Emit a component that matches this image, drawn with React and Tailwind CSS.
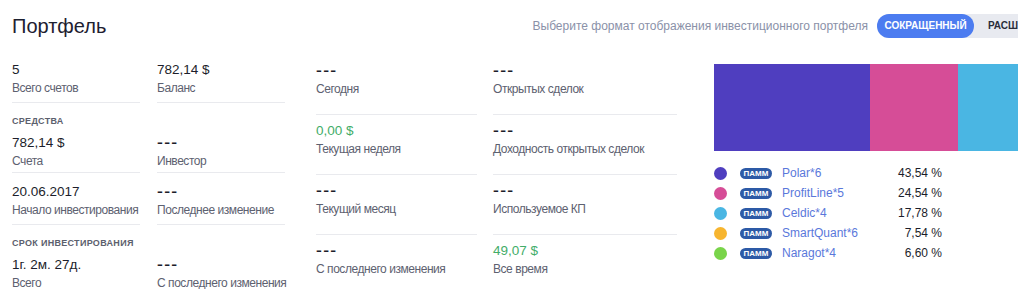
import React from "react";

const F = "font-['Liberation_Sans',Arial,sans-serif]";

function Val({ value, green }) {
  const dash = value === "---";
  return (
    <div
      className={`text-[13.5px] leading-[18px] whitespace-nowrap ${green ? "text-[#43ad69]" : "text-[#1c1e2b]"}`}
    >
      {dash ? (
        <span className="inline-block origin-left scale-x-[1.3] tracking-[1px] font-bold">---</span>
      ) : (
        value
      )}
    </div>
  );
}

function Lbl({ label }) {
  return (
    <div className="text-[12px] leading-[18px] tracking-[-0.45px] whitespace-nowrap text-[#5d6170]">{label}</div>
  );
}

function Cell({ value, label, green, header, last }) {
  return (
    <div className={`${header !== undefined ? "pt-[10px] pb-[2px]" : "pt-[10px] pb-[4px]"} ${last ? "" : "border-b border-[#e9eaee]"}`}>
      {header !== undefined && (
        <div className="h-[16px] leading-[16px] text-[9px] font-bold tracking-[0.3px] whitespace-nowrap text-[#5c606d] mb-[5px]">
          {header}
        </div>
      )}
      <Val value={value} green={green} />
      <Lbl label={label} />
    </div>
  );
}

function Cell2({ value, label, green, last }) {
  return (
    <div className={`pt-[7px] pb-[16px] ${last ? "" : "border-b border-[#e9eaee]"}`}>
      <Val value={value} green={green} />
      <Lbl label={label} />
    </div>
  );
}

const legend = [
  { c: "bg-[#4f3ebf]", n: "Polar*6", p: "43,54 %" },
  { c: "bg-[#d64d97]", n: "ProfitLine*5", p: "24,54 %" },
  { c: "bg-[#4ab6e3]", n: "Celdic*4", p: "17,78 %" },
  { c: "bg-[#f7b52f]", n: "SmartQuant*6", p: "7,54 %" },
  { c: "bg-[#79d44a]", n: "Naragot*4", p: "6,60 %" },
];

export default function App() {
  return (
    <div className={`w-[1018px] h-[289px] overflow-hidden bg-white ${F}`}>
      <div className="flex items-center h-[51px] w-[1200px]">
        <div className="w-[525px] shrink-0 pl-[12px] text-[20px] text-[#1d2030]">Портфель</div>
        <div className="w-[343px] shrink-0 text-right text-[12px] text-[#8a91a8] whitespace-nowrap">
          Выберите формат отображения инвестиционного портфеля
        </div>
        <div className="ml-[9px] flex shrink-0 h-[24px] rounded-full bg-[#e8eaf0]">
          <div className="w-[97px] h-[24px] rounded-full bg-[#4c7cf0] text-white text-[10px] font-bold flex items-center justify-center">
            СОКРАЩЕННЫЙ
          </div>
          <div className="w-[97px] h-[24px] text-[#2a2d3a] text-[10px] font-bold flex items-center pl-[14px]">
            РАСШИРЕННЫЙ
          </div>
        </div>
      </div>
      <div className="flex pl-[12px] w-[1200px]">
        <div className="grid grid-cols-[128px_128px] gap-x-[17px] w-[273px] shrink-0">
          <Cell value="5" label="Всего счетов" />
          <Cell value="782,14 $" label="Баланс" />
          <Cell header="СРЕДСТВА" value="782,14 $" label="Счета" />
          <Cell header="" value="---" label="Инвестор" />
          <Cell value="20.06.2017" label="Начало инвестирования" />
          <Cell value="---" label="Последнее изменение" />
          <Cell header="СРОК ИНВЕСТИРОВАНИЯ" value="1г. 2м. 27д." label="Всего" last />
          <Cell header="" value="---" label="С последнего изменения" last />
        </div>
        <div className="ml-[31px] grid grid-cols-[161px_184px] gap-x-[16px] pt-[4px] shrink-0 content-start">
          <Cell2 value="---" label="Сегодня" />
          <Cell2 value="---" label="Открытых сделок" />
          <Cell2 value="0,00 $" green label="Текущая неделя" />
          <Cell2 value="---" label="Доходность открытых сделок" />
          <Cell2 value="---" label="Текущий месяц" />
          <Cell2 value="---" label="Используемое КП" />
          <Cell2 value="---" label="С последнего изменения" last />
          <Cell2 value="49,07 $" green label="Все время" last />
        </div>
        <div className="ml-[37px] pt-[13px] shrink-0">
          <div className="flex w-[358px] h-[87px]">
            <div className="w-[156px] bg-[#4f3ebf]" />
            <div className="w-[88px] bg-[#d64d97]" />
            <div className="w-[64px] bg-[#4ab6e3]" />
            <div className="w-[27px] bg-[#f7b52f]" />
            <div className="w-[23px] bg-[#79d44a]" />
          </div>
          <div className="mt-[12px] w-[228px]">
            {legend.map((l) => (
              <div key={l.n} className="flex items-center h-[20px]">
                <div className={`w-[13px] h-[13px] rounded-full ${l.c}`} />
                <div className="ml-[13px] w-[32px] h-[11px] rounded-full bg-[#2d5aa6] text-white text-[8px] font-bold leading-[11px] text-center">
                  ПАММ
                </div>
                <div className="ml-[10px] text-[12px] text-[#5a78db]">{l.n}</div>
                <div className="ml-auto text-[12px] text-[#1c1e2b]">{l.p}</div>
              </div>
            ))}
          </div>
        </div>
      </div>
    </div>
  );
}
